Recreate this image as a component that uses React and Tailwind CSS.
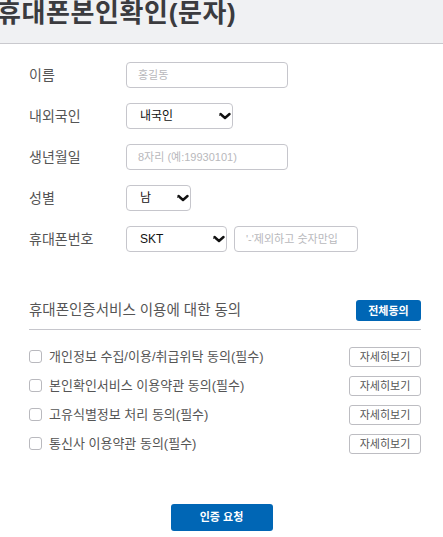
import React from "react";

const FONT = { fontFamily: '"Liberation Sans", "Noto Sans CJK KR", sans-serif' };

const AGREEMENTS = [
  "개인정보 수집/이용/취급위탁 동의(필수)",
  "본인확인서비스 이용약관 동의(필수)",
  "고유식별정보 처리 동의(필수)",
  "통신사 이용약관 동의(필수)",
];

function Chevron() {
  return (
    <svg width="12" height="8" viewBox="0 0 12 8" className="absolute right-[1px] top-1/2 -translate-y-1/2">
      <path d="M1.5 2 L6 6 L10.5 2" fill="none" stroke="#111" strokeWidth="2.4" strokeLinecap="round" strokeLinejoin="round" />
      <path d="M0 3.5 L2 3.5" stroke="#666" strokeWidth="1" />
    </svg>
  );
}

function Select({ value, width }) {
  return (
    <div className={`relative flex h-[26px] items-center rounded-[4px] border border-[#c6c6cc] bg-white pl-[13px] text-[12px] text-[#111] ${width}`}>
      {value}
      <Chevron />
    </div>
  );
}

function Input({ placeholder, width }) {
  return (
    <div className={`flex h-[26px] items-center rounded-[4px] border border-[#c6c6cc] bg-white pl-[11px] text-[11px] text-[#b8b8bc] ${width}`}>
      {placeholder}
    </div>
  );
}

function Row({ label, children }) {
  return (
    <div className="flex items-center">
      <div className="w-[97px] text-[14px] text-[#555]">{label}</div>
      <div className="flex items-center gap-[7px]">{children}</div>
    </div>
  );
}

export default function App() {
  return (
    <div className="min-h-screen w-[443px] bg-white" style={FONT}>
      <header className="h-[44px] overflow-hidden border-b border-[#c9c9ce] bg-[#f0f1f3]">
        <h1 className="-ml-[3px] -mt-[2px] whitespace-nowrap text-[26px] font-bold leading-[30px] tracking-[0.6px] text-[#3b3b3f]">
          휴대폰본인확인(문자)
        </h1>
      </header>

      <div className="pl-[29px] pr-[22px] pt-[18px]">
        <div className="flex flex-col gap-[15px]">
          <Row label="이름">
            <Input placeholder="홍길동" width="w-[162px]" />
          </Row>
          <Row label="내외국인">
            <Select value="내국인" width="w-[107px]" />
          </Row>
          <Row label="생년월일">
            <Input placeholder="8자리 (예:19930101)" width="w-[162px]" />
          </Row>
          <Row label="성별">
            <Select value="남" width="w-[65px]" />
          </Row>
          <Row label="휴대폰번호">
            <Select value="SKT" width="w-[101px]" />
            <Input placeholder="'-'제외하고 숫자만입" width="w-[124px] pl-[10px] overflow-hidden whitespace-nowrap" />
          </Row>
        </div>

        <section className="mt-[48px]">
          <div className="flex items-center justify-between pb-[7px]">
            <h2 className="text-[14.5px] text-[#555]">휴대폰인증서비스 이용에 대한 동의</h2>
            <button className="h-[21px] w-[65px] rounded-[3px] bg-[#0066b5] text-[11px] font-bold text-white">
              전체동의
            </button>
          </div>
          <div className="h-px bg-[#c6c6cc]" />

          <div className="mt-[17px] flex flex-col gap-[9px]">
            {AGREEMENTS.map((t) => (
              <div key={t} className="flex h-[20px] items-center justify-between">
                <div className="flex items-center">
                  <span className="h-[13px] w-[13px] rounded-[3px] border border-[#b9b9be] bg-white" />
                  <span className="ml-[7px] text-[13px] text-[#555]">{t}</span>
                </div>
                <button className="h-[20px] w-[72px] rounded-[3px] border border-[#bdbdc2] bg-white text-[11px] text-[#555]">
                  자세히보기
                </button>
              </div>
            ))}
          </div>
        </section>

        <div className="mt-[50px] flex justify-center pr-[7px]">
          <button className="h-[27px] w-[102px] rounded-[3px] bg-[#0066b5] text-[11px] font-bold text-white">
            인증 요청
          </button>
        </div>
      </div>
    </div>
  );
}
